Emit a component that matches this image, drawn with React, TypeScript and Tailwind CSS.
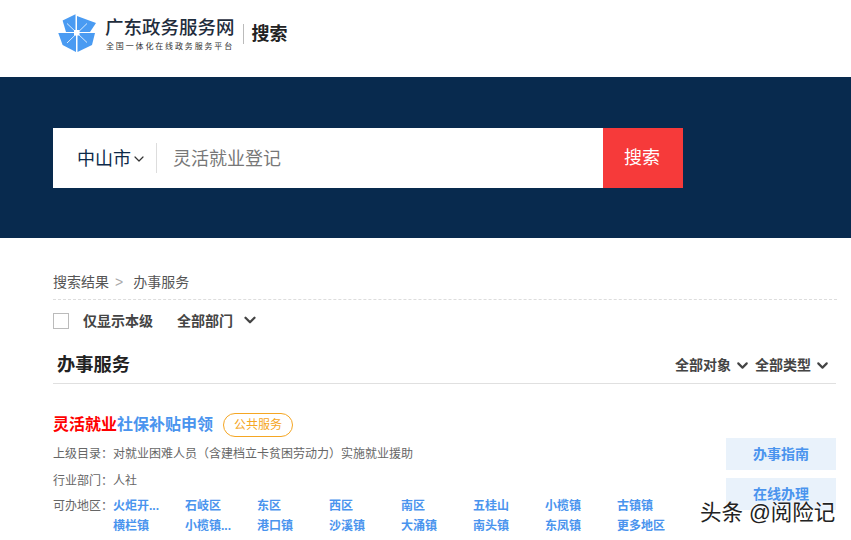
import { ChevronDown } from "lucide-react";

const FONT = "font-['Liberation_Sans','Noto_Sans_CJK_SC',sans-serif]";

const regions = [
  ["火炬开...", "石岐区", "东区", "西区", "南区", "五桂山", "小榄镇", "古镇镇"],
  ["横栏镇", "小榄镇...", "港口镇", "沙溪镇", "大涌镇", "南头镇", "东凤镇", "更多地区"],
];

function Logo() {
  return (
    <svg width="38" height="38" viewBox="0 0 38 38" className="shrink-0">
      <path d="M4.6 6.6 L17.5 0.3 L17.5 18 L8 18 Z" fill="#4a9bf2" />
      <path d="M19 2 L38 9 L32 18 L19 18 Z" fill="#4a9bf2" />
      <path d="M19.5 19 L37 19 L34 31 L19.5 38 Z" fill="#4a9bf2" />
      <path d="M0.3 19 L18 19 L18 38 L4.6 31 Z" fill="#4a9bf2" />
      <path d="M9 9.5 L29 28.5 M29 9.5 L9 29" stroke="#ffffff" strokeWidth="0.8" />
      <rect x="16" y="16" width="5.5" height="5.5" fill="#ffffff" />
    </svg>
  );
}

export default function App() {
  return (
    <div className={`relative h-[540px] w-[851px] overflow-hidden bg-white ${FONT}`}>
      <header className="flex h-[77px] items-start pl-[58px] pt-[14px]">
        <Logo />
        <div className="ml-[9px] mt-[2px]">
          <p className="text-[18.5px] leading-[23px] font-medium text-[#1f2d3d]">广东政务服务网</p>
          <p className="ml-[1px] mt-[3px] text-[8px] leading-[10px] tracking-[1.85px] text-[#333]">全国一体化在线政务服务平台</p>
        </div>
        <div className="ml-[8px] mt-[10px] h-[20px] w-px bg-[#bbb]" />
        <p className="ml-[8px] mt-[8px] text-[18px] leading-[24px] font-bold text-[#222]">搜索</p>
      </header>

      <section className="h-[161px] bg-[#082a4e] pl-[53px] pt-[51px]">
        <div className="flex h-[60px] w-[630px] items-center bg-white">
          <div className="flex h-[30px] w-[104px] items-center border-r border-[#ddd] pl-[24px]">
            <span className="mt-[1px] text-[18px] leading-[30px] text-[#0d2a4a]">中山市</span>
            <ChevronDown size={16} strokeWidth={1.8} className="mt-[2px] text-[#333]" />
          </div>
          <span className="ml-[16px] mt-[2px] flex-1 text-[18px] text-[#777]">灵活就业登记</span>
          <button className="h-[60px] w-[80px] bg-[#f63a3a] pr-[2px] pt-[1px] text-[18px] text-white">搜索</button>
        </div>
      </section>

      <main className="ml-[53px] w-[783px]">
        <div className="-mr-[1px] flex h-[62px] items-end border-b border-dashed border-[#ddd] pb-[8px] text-[14px] leading-[18px] text-[#555]">
          <span>搜索结果</span>
          <span className="ml-[6px] text-[#aaa]">&gt;</span>
          <span className="ml-[10px]">办事服务</span>
        </div>

        <div className="mt-[13px] flex h-[16px] items-center text-[14px] font-bold text-[#444]">
          <span className="h-[16px] w-[16px] border border-[#bbb]" />
          <span className="ml-[14px]">仅显示本级</span>
          <span className="ml-[24px]">全部部门</span>
          <ChevronDown size={18} strokeWidth={3} className="ml-[8px] -mt-[3px] text-[#444]" />
        </div>

        <div className="mt-[24px] flex h-[31px] items-start justify-between border-b border-[#e0e0e0]">
          <h2 className="ml-[4px] text-[18.25px] leading-[24px] font-bold text-[#222]">办事服务</h2>
          <div className="mt-[2px] flex items-center text-[14px] font-bold text-[#444]">
            <span>全部对象</span>
            <ChevronDown size={17} strokeWidth={3} className="ml-[3px]" />
            <span className="ml-[4px]">全部类型</span>
            <ChevronDown size={17} strokeWidth={3} className="ml-[3px] mr-[5px]" />
          </div>
        </div>

        <div className="mt-[29px] flex items-start justify-between">
          <div>
            <div className="flex h-[24px] items-center">
              <h3 className="text-[16px] font-bold text-[#4a94ee]">
                <span className="text-[#f00]">灵活就业</span>社保补贴申领
              </h3>
              <span className="ml-[10px] flex h-[24px] w-[70px] items-center justify-center rounded-full border border-[#f5a623] text-[12px] text-[#f5a623]">
                公共服务
              </span>
            </div>
            <p className="mt-[8px] text-[12px] leading-[18px] text-[#666]">上级目录：对就业困难人员（含建档立卡贫困劳动力）实施就业援助</p>
            <p className="mt-[9px] text-[12px] leading-[18px] text-[#666]">行业部门：人社</p>
            <div className="mt-[6px] flex text-[12px] leading-[20px]">
              <span className="w-[60px] text-[#666]">可办地区：</span>
              <div className="grid grid-cols-[repeat(8,72px)] font-bold text-[#4a94ee]">
                {regions.flat().map((name) => (
                  <span key={name}>{name}</span>
                ))}
              </div>
            </div>
          </div>
          <div className="mt-[25px] flex w-[110px] shrink-0 flex-col gap-[8px]">
            <button className="h-[32px] bg-[#e9f2fb] text-[14px] font-bold text-[#4a94ee]">办事指南</button>
            <button className="h-[32px] bg-[#e9f2fb] text-[14px] font-bold text-[#4a94ee]">在线办理</button>
          </div>
        </div>
      </main>

      <div className="absolute left-[700px] top-[499px] text-[21.5px] leading-[28px] text-[#222] [text-shadow:0_0_2px_#fff,0_0_2px_#fff]">
        头条 @阅险记
      </div>
    </div>
  );
}
